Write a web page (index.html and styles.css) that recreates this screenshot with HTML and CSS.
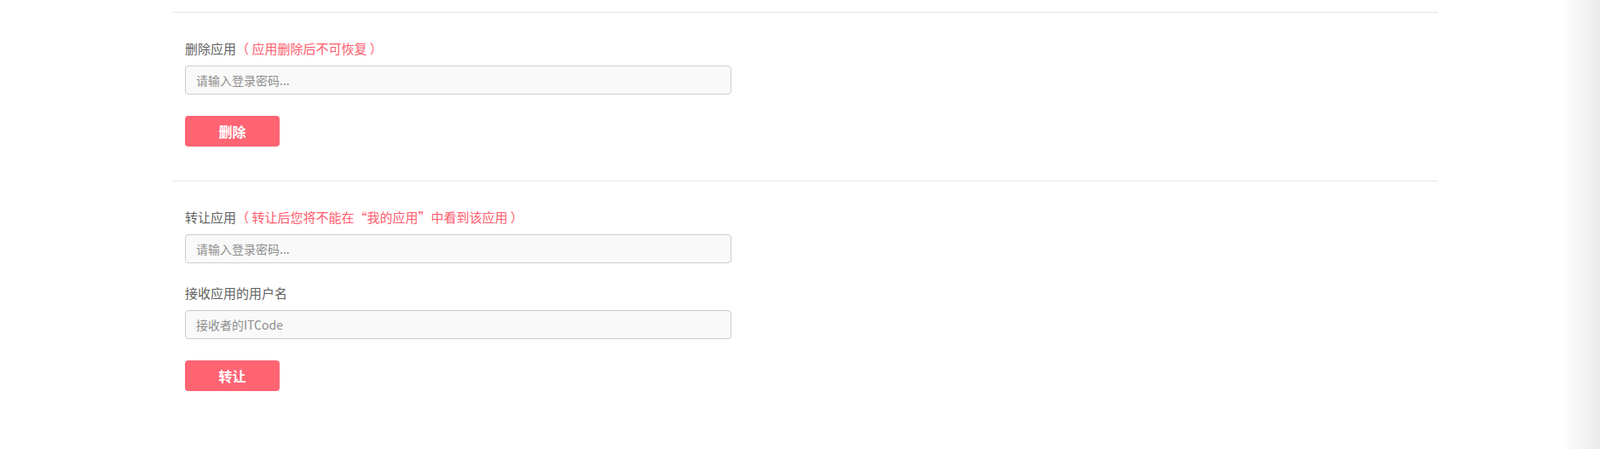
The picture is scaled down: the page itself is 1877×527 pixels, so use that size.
FILE: index.html
```html
<!DOCTYPE html>
<html lang="zh-CN">
<head>
<meta charset="utf-8">
<title>应用设置</title>
<link rel="stylesheet" href="styles.css">
</head>
<body>
<div class="page">
  <div class="panel">
    <section class="section">
      <div class="group">
        <label class="label">删除应用<span class="warn">（ 应用删除后不可恢复 ）</span></label>
        <input class="input" type="password" placeholder="请输入登录密码...">
      </div>
      <button class="btn" type="button">删除</button>
    </section>
    <section class="section">
      <div class="group">
        <label class="label">转让应用<span class="warn">（ 转让后您将不能在“我的应用”中看到该应用 ）</span></label>
        <input class="input" type="password" placeholder="请输入登录密码...">
      </div>
      <div class="group">
        <label class="label">接收应用的用户名</label>
        <input class="input" type="text" placeholder="接收者的ITCode">
      </div>
      <button class="btn" type="button">转让</button>
    </section>
  </div>
</div>
<div class="edge-shadow"></div>
</body>
</html>
```
FILE: styles.css
```css
html, body {
  margin: 0;
  padding: 0;
  background: #ffffff;
  font-family: "Noto Sans CJK SC", "Noto Sans", sans-serif;
}

.page {
  padding: 14px 0 0 202px;
}

.panel {
  width: 1485px;
}

.section {
  border-top: 1px solid #e6e6e6;
  padding: 32px 15px 40px;
}

.group {
  display: flex;
  flex-direction: column;
  gap: 10px;
  margin-bottom: 25px;
}

.label {
  font-size: 15px;
  line-height: 20px;
  height: 20px;
  color: #5f5f5f;
}

.warn {
  color: #ff5a6c;
}

.input {
  box-sizing: border-box;
  width: 641px;
  height: 34px;
  margin: 0;
  padding: 0 12px;
  border: 1px solid #cccccc;
  border-radius: 4px;
  background: #f9f9f9;
  font-family: "Noto Sans CJK SC", "Open Sans", sans-serif;
  font-size: 14px;
  color: #555555;
  outline: none;
}

.input::placeholder {
  color: #8e8e8e;
}

.btn {
  display: block;
  width: 111px;
  height: 36px;
  margin: 0;
  padding: 0;
  border: none;
  border-radius: 4px;
  background: #ff6473;
  color: #ffffff;
  font-family: "Noto Sans CJK SC", sans-serif;
  font-size: 16px;
  font-weight: 700;
  cursor: pointer;
}

.edge-shadow {
  position: fixed;
  top: 0;
  right: 0;
  width: 46px;
  height: 100%;
  background: linear-gradient(to right, rgba(236, 236, 236, 0), #ebebeb);
  pointer-events: none;
}
```
